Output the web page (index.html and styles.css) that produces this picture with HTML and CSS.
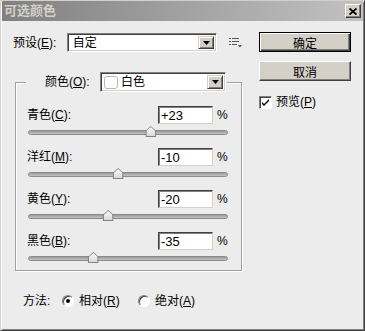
FILE: index.html
```html
<!DOCTYPE html>
<html lang="zh-CN">
<head>
    <meta charset="UTF-8">
    <title>可选颜色</title>
    <link rel="stylesheet" href="styles.css">
</head>
<body>

<div class="window">
    <div class="titlebar">
        <span class="title">可选颜色</span>
        <span class="close-btn">
            <svg width="8" height="7" viewBox="0 0 8 7"><path d="M0.5 0.5 L7.5 6.5 M7.5 0.5 L0.5 6.5" stroke="#000" stroke-width="1.8"/></svg>
        </span>
    </div>

    <div class="main">
        <div class="left-col">
            <div class="preset-row">
                <span class="preset-label">预设(<u>E</u>):</span>
                <div class="combo preset-combo">
                    <span class="combo-text">自定</span>
                    <span class="combo-btn"><svg width="7" height="4" viewBox="0 0 7 4"><path d="M0 0 H7 L3.5 4 Z" fill="#000"/></svg></span>
                </div>
                <svg class="menu-icon" width="13" height="10" viewBox="0 0 13 10">
                    <rect x="0" y="0" width="2" height="1" fill="#555"/>
                    <rect x="3" y="0" width="7" height="1" fill="#555"/>
                    <rect x="0" y="3" width="2" height="1" fill="#555"/>
                    <rect x="3" y="3" width="7" height="1" fill="#555"/>
                    <rect x="0" y="6" width="2" height="1" fill="#555"/>
                    <rect x="3" y="6" width="5" height="1" fill="#555"/>
                    <path d="M9 7 H13 L11 9.5 Z" fill="#555"/>
                </svg>
            </div>

            <fieldset class="group">
                <legend class="group-legend">
                    <span class="legend-label">颜色(<u>O</u>):</span>
                    <div class="combo color-combo">
                        <span class="swatch"></span>
                        <span class="combo-text">白色</span>
                        <span class="combo-btn"><svg width="7" height="4" viewBox="0 0 7 4"><path d="M0 0 H7 L3.5 4 Z" fill="#000"/></svg></span>
                    </div>
                </legend>

                <div class="slider-row">
                    <div class="slider-head">
                        <span class="slider-label">青色(<u>C</u>):</span>
                        <span class="num-field">+23</span>
                        <span class="pct">%</span>
                    </div>
                    <div class="track"><span class="thumb" style="left: 61.5%"></span></div>
                </div>

                <div class="slider-row">
                    <div class="slider-head">
                        <span class="slider-label">洋红(<u>M</u>):</span>
                        <span class="num-field">-10</span>
                        <span class="pct">%</span>
                    </div>
                    <div class="track"><span class="thumb" style="left: 45%"></span></div>
                </div>

                <div class="slider-row">
                    <div class="slider-head">
                        <span class="slider-label">黄色(<u>Y</u>):</span>
                        <span class="num-field">-20</span>
                        <span class="pct">%</span>
                    </div>
                    <div class="track"><span class="thumb" style="left: 40%"></span></div>
                </div>

                <div class="slider-row">
                    <div class="slider-head">
                        <span class="slider-label">黑色(<u>B</u>):</span>
                        <span class="num-field">-35</span>
                        <span class="pct">%</span>
                    </div>
                    <div class="track"><span class="thumb" style="left: 32.5%"></span></div>
                </div>
            </fieldset>

            <div class="method-row">
                <span class="method-label">方法:</span>
                <span class="radio-opt first-opt"><span class="radio checked"></span>相对(<u>R</u>)</span>
                <span class="radio-opt"><span class="radio"></span>绝对(<u>A</u>)</span>
            </div>
        </div>

        <div class="right-col">
            <button class="btn default-btn">确定</button>
            <button class="btn">取消</button>
            <div class="check-row">
                <span class="checkbox">
                    <svg width="7" height="7" viewBox="0 0 7 7"><path d="M0 3 L0 5 L2 7 L7 2 L7 0 L2 5 Z" fill="#000"/></svg>
                </span>
                <span>预览(<u>P</u>)</span>
            </div>
        </div>
    </div>
</div>

</body>
</html>
```

FILE: styles.css
```css
body {
    margin: 0;
    font-family: "Liberation Sans", "Noto Sans CJK SC", sans-serif;
    font-size: 12px;
    line-height: 14px;
    color: #000;
}
u {
    text-decoration: underline;
    text-underline-offset: 1px;
}
.window {
    width: 365px;
    height: 331px;
    box-sizing: border-box;
    background: #ececec;
    border: 1px solid;
    border-color: #d4d0c8 #404040 #404040 #d4d0c8;
    box-shadow: inset 1px 1px 0 #fff, inset -1px -1px 0 #808080;
}
.titlebar {
    height: 20px;
    margin: 0 1px;
    padding: 0 2px 0 2px;
    background: linear-gradient(to right, #808080, #c2c2c2);
    display: flex;
    align-items: center;
    justify-content: space-between;
}
.title {
    color: #d4d0c8;
    font-weight: bold;
    font-size: 13px;
}
.close-btn {
    width: 16px;
    height: 14px;
    box-sizing: border-box;
    background: #d4d0c8;
    border: 1px solid;
    border-color: #fff #404040 #404040 #fff;
    box-shadow: inset -1px -1px 0 #808080;
    display: flex;
    align-items: center;
    justify-content: center;
}
.main {
    display: flex;
    padding: 12px 0 0 12px;
}
.left-col {
    width: 229px;
}
.preset-row {
    display: flex;
    align-items: center;
    height: 19px;
}
.preset-label {
    width: 54px;
}
.combo {
    display: flex;
    align-items: center;
    box-sizing: border-box;
    background: #fff;
    border: 1px solid;
    border-color: #808080 #fff #fff #808080;
    box-shadow: inset 1px 1px 0 #404040, inset -1px -1px 0 #d4d0c8;
    padding: 2px;
}
.preset-combo {
    width: 151px;
    height: 19px;
}
.combo-text {
    flex: 1;
    padding-left: 3px;
}
.combo-btn {
    width: 16px;
    height: 100%;
    box-sizing: border-box;
    background: #d4d0c8;
    border: 1px solid;
    border-color: #d4d0c8 #404040 #404040 #d4d0c8;
    box-shadow: inset 1px 1px 0 #fff, inset -1px -1px 0 #808080;
    display: flex;
    align-items: center;
    justify-content: center;
}
.menu-icon {
    margin-left: 12px;
}
.group {
    margin: 20px 0 0 2px;
    width: 227px;
    min-width: 0;
    box-sizing: border-box;
    padding: 14px 12px 7px 11px;
    border: 1px solid #a0a0a0;
    box-shadow: inset 1px 1px 0 #fff, 1px 1px 0 #fff;
}
.group-legend {
    display: flex;
    align-items: center;
    margin-left: -1px;
    padding: 0 1px 0 19px;
    background: #ececec;
}
.legend-label {
    width: 55px;
}
.color-combo {
    width: 126px;
    height: 20px;
}
.swatch {
    width: 14px;
    height: 13px;
    box-sizing: border-box;
    border: 1px solid #b8b8b8;
    border-radius: 3px;
    margin-left: 1px;
}
.color-combo .combo-text {
    padding-left: 3px;
}
.slider-row {
    height: 31px;
    margin-bottom: 11px;
}
.slider-row:last-child {
    margin-bottom: 0;
}
.slider-head {
    display: flex;
    align-items: center;
    height: 18px;
}
.slider-label {
    flex: 1;
}
.num-field {
    width: 55px;
    height: 18px;
    box-sizing: border-box;
    background: #fff;
    border: 1px solid;
    border-color: #404040 #d4d0c8 #d4d0c8 #404040;
    box-shadow: inset 1px 1px 0 #808080;
    padding: 1px 0 0 2px;
    font-size: 13px;
    line-height: 15px;
}
.pct {
    margin-left: 4px;
    width: 12px;
}
.track {
    position: relative;
    width: 200px;
    height: 5px;
    margin: 6px 0 2px 1px;
    box-sizing: border-box;
    border: 1px solid #8a8a8a;
    border-radius: 3px;
    background: linear-gradient(#9a9a9a, #c4c4c4);
}
.thumb {
    position: absolute;
    top: -5px;
    width: 11px;
    height: 11px;
    transform: translateX(-50%);
    background: #808080;
    clip-path: polygon(0 45%, 50% 0, 100% 45%, 100% 100%, 0 100%);
}
.thumb::after {
    content: "";
    position: absolute;
    left: 1px;
    top: 1px;
    right: 1px;
    bottom: 1px;
    background: linear-gradient(#fafafa, #d8d8d8);
    clip-path: polygon(0 45%, 50% 0, 100% 45%, 100% 100%, 0 100%);
}
.method-row {
    display: flex;
    align-items: center;
    height: 13px;
    margin-top: 23px;
    padding-left: 10px;
}
.method-label {
    width: 39px;
}
.radio-opt {
    display: flex;
    align-items: center;
}
.first-opt {
    width: 76px;
}
.radio {
    width: 12px;
    height: 12px;
    box-sizing: border-box;
    border-radius: 50%;
    background: #fff;
    border: 1px solid;
    border-color: #808080 #fff #fff #808080;
    box-shadow: inset 1px 1px 0 #404040;
    margin-right: 5px;
    display: flex;
    align-items: center;
    justify-content: center;
}
.radio.checked::after {
    content: "";
    width: 4px;
    height: 4px;
    border-radius: 50%;
    background: #000;
}
.right-col {
    margin: -1px 0 0 17px;
    display: flex;
    flex-direction: column;
}
.btn {
    width: 92px;
    height: 20px;
    box-sizing: border-box;
    background: #d4d0c8;
    border: 1px solid;
    border-color: #fff #404040 #404040 #fff;
    box-shadow: inset -1px -1px 0 #808080;
    font-family: "Liberation Sans", "Noto Sans CJK SC", sans-serif;
    font-size: 12px;
    padding: 0;
    margin-bottom: 9px;
}
.default-btn {
    border: 1px solid #000;
    box-shadow: inset 1px 1px 0 #fff, inset -1px -1px 0 #404040, inset -2px -2px 0 #808080;
}
.check-row {
    display: flex;
    align-items: center;
    margin-top: 5px;
}
.checkbox {
    width: 13px;
    height: 13px;
    box-sizing: border-box;
    background: #fff;
    border: 1px solid;
    border-color: #808080 #fff #fff #808080;
    box-shadow: inset 1px 1px 0 #404040;
    margin-right: 4px;
    display: flex;
    align-items: center;
    justify-content: center;
}
```
